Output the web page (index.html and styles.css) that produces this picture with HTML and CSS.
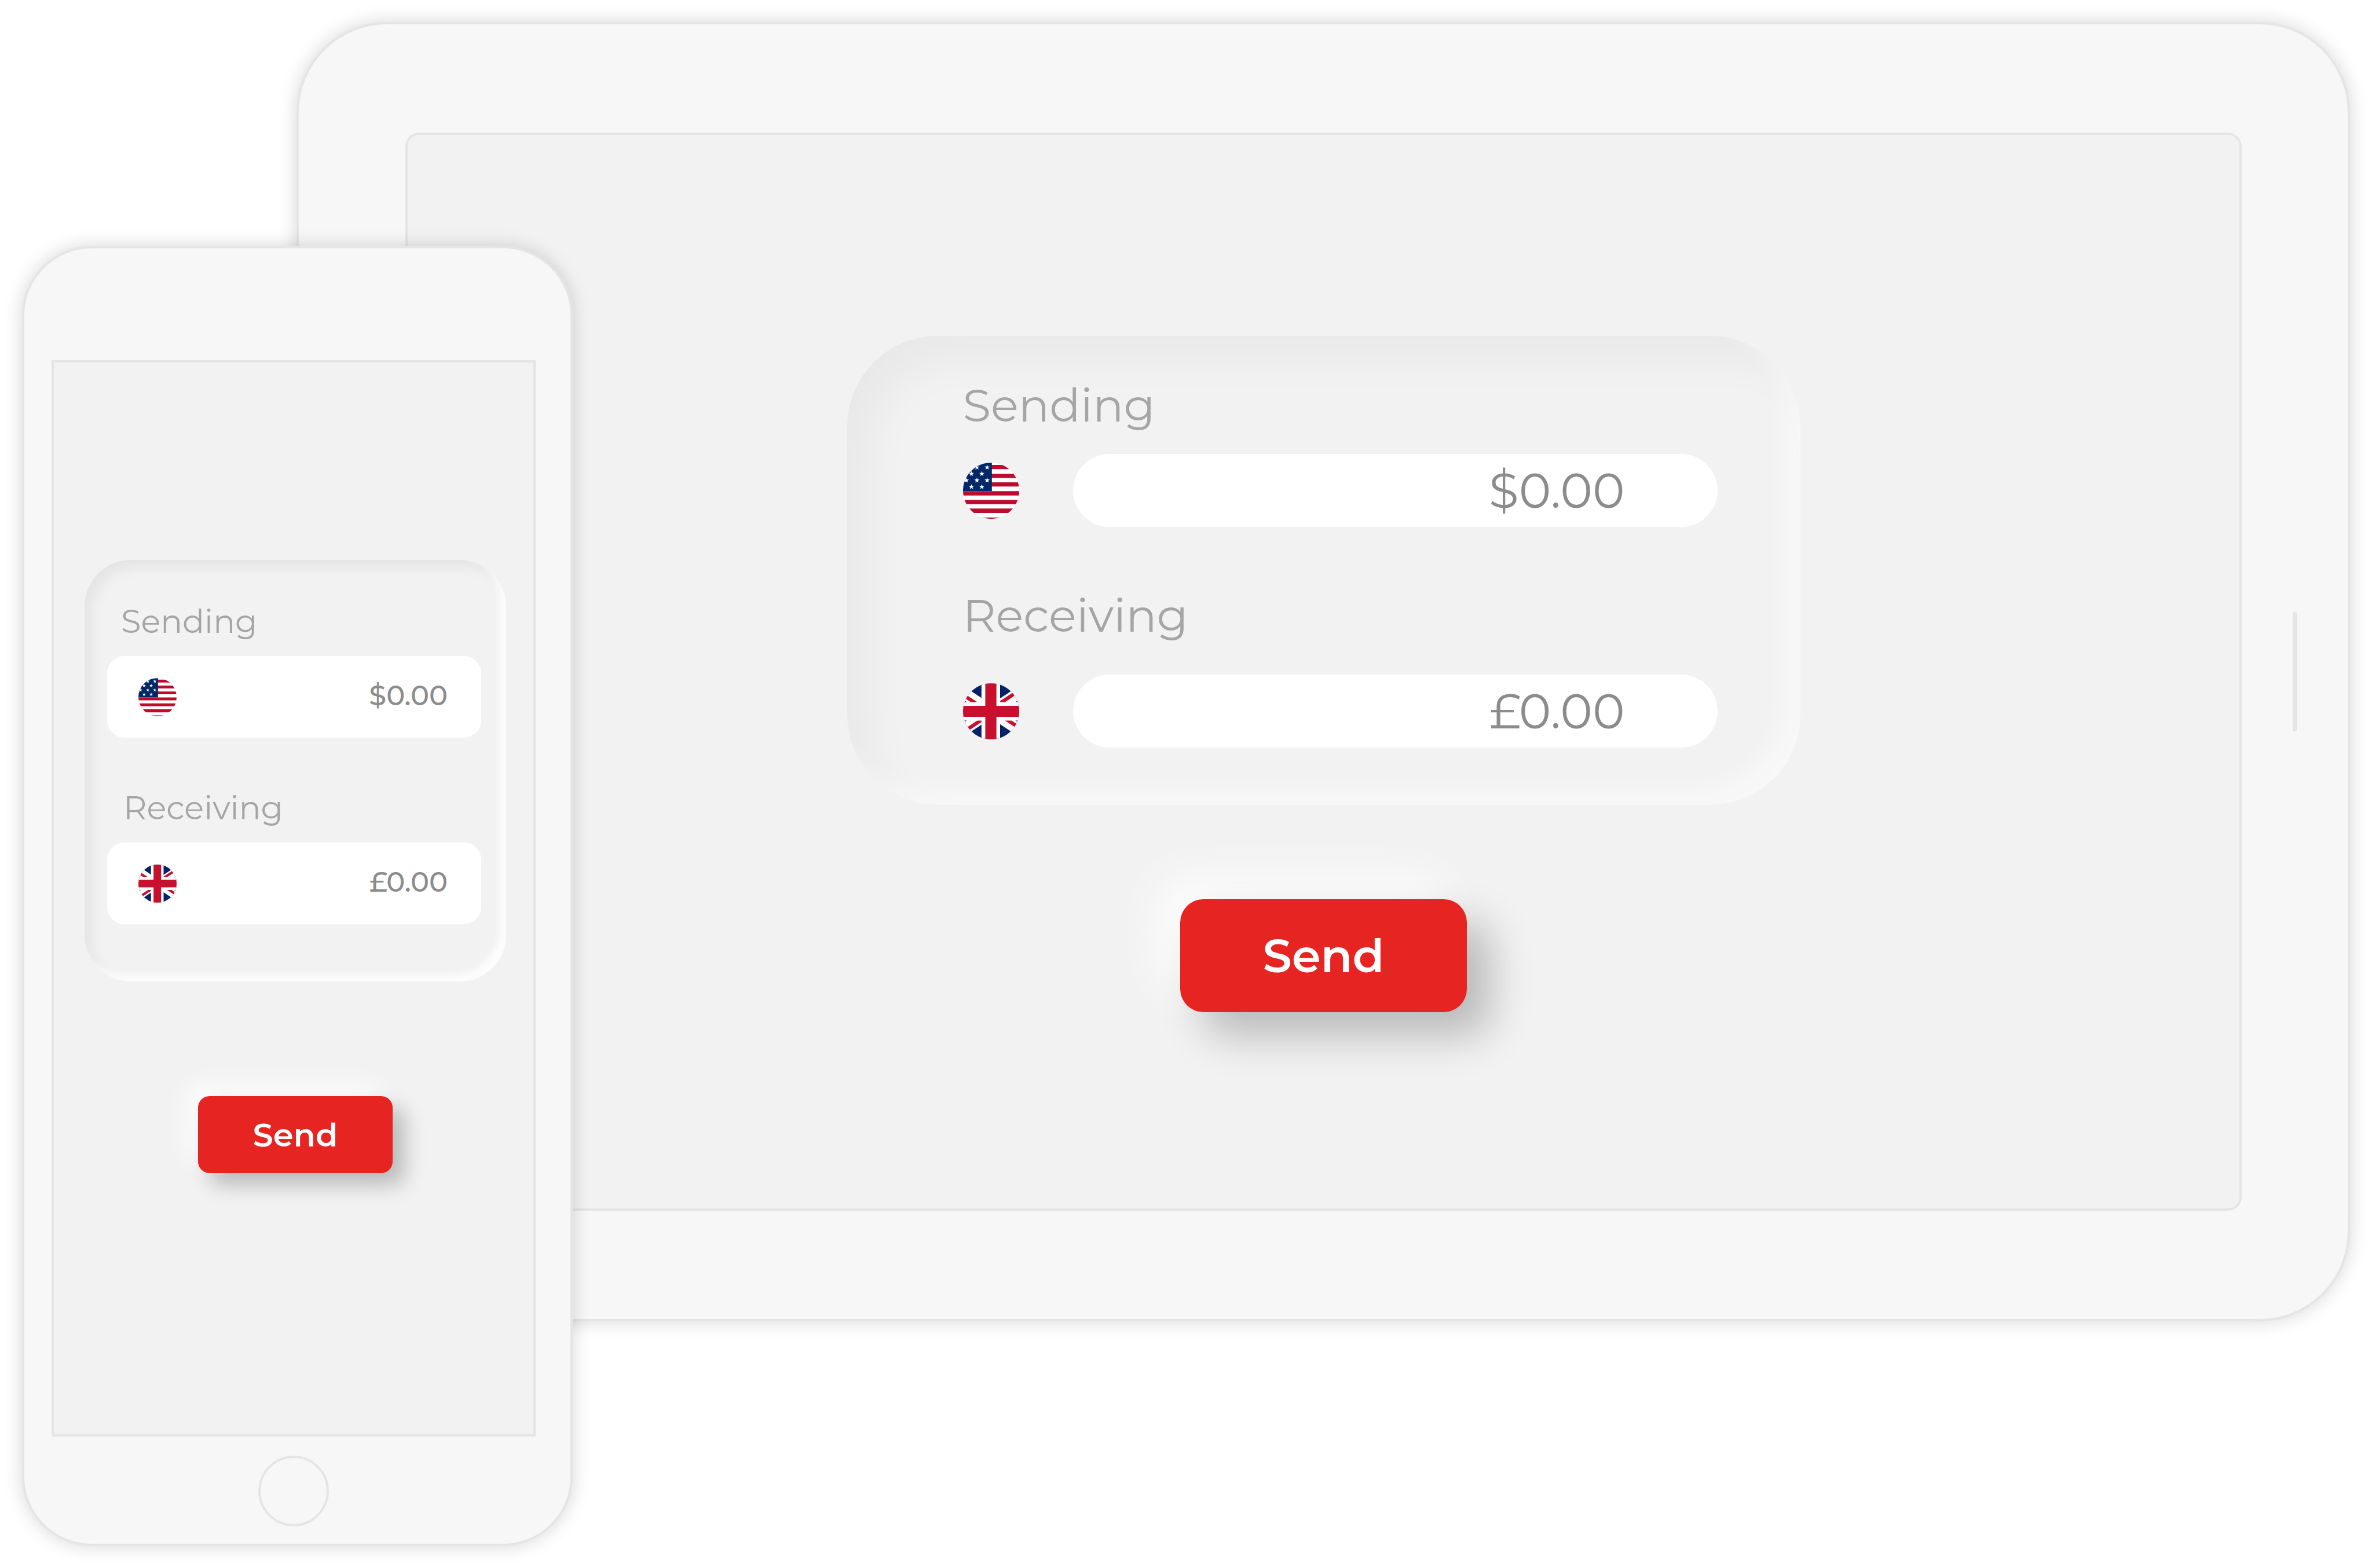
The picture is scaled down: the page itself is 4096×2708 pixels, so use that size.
FILE: index.html
```html
<!DOCTYPE html>
<html lang="en">
<head>
  <meta charset="utf-8">
  <meta name="viewport" content="width=device-width, initial-scale=1">
  <title>Send money</title>
  <link rel="stylesheet" href="styles.css">
</head>
<body>
  <svg class="defs" aria-hidden="true">
    <defs>
      <path id="star" d="M0-15 3.6-4.9 14.3-4.6 5.8 1.9 8.8 12.1 0 6.1-8.8 12.1-5.8 1.9-14.3-4.6-3.6-4.9Z"/>
      <symbol id="flag-us" viewBox="0 0 308 306">
        <rect width="308" height="306" fill="#fff"/>
        <path fill="#bf0a30" d="M0 12h308v23H0zM0 60h308v23H0zM0 107h308v23H0zM0 155h308v24H0zM0 203h308v24H0zM0 251h308v24H0zM0 300h308v24H0z"/>
        <rect width="158" height="155" fill="#002868"/>
        <g fill="#fff">
          <use href="#star" x="76" y="25"/><use href="#star" x="132" y="25"/>
          <use href="#star" x="46" y="60"/><use href="#star" x="103" y="60"/>
          <use href="#star" x="18" y="96"/><use href="#star" x="76" y="96"/><use href="#star" x="132" y="96"/>
          <use href="#star" x="46" y="132"/><use href="#star" x="103" y="132"/>
        </g>
      </symbol>
      <symbol id="flag-uk" viewBox="0 0 308 306">
        <rect width="308" height="306" fill="#012169"/>
        <path fill="#fff" d="M-10 6 318 224V300L-10 82ZM-10 224 318 6V82L-10 300Z"/>
        <path fill="#c8102e" d="M-10 44 154 153V177L-10 68ZM154 153 318 44V20L154 129ZM-10 262 154 153V177L-10 286ZM154 153 318 262V238L154 129Z"/>
        <path fill="#fff" d="M101 0h102v306H101zM0 102h308v102H0z"/>
        <path fill="#c8102e" d="M122 0h61v306h-61zM0 123h308v60H0z"/>
      </symbol>
    </defs>
  </svg>

  <main class="stage">
    <section class="device tablet" aria-label="Tablet">
      <form class="screen">
        <div class="card">
          <div class="field">
            <label class="label" for="tablet-sending">Sending</label>
            <div class="row">
              <svg class="flag" role="img" aria-label="US dollar"><use href="#flag-us"/></svg>
              <input class="amount" id="tablet-sending" type="text" value="$0.00">
            </div>
          </div>
          <div class="field field-receiving">
            <label class="label" for="tablet-receiving">Receiving</label>
            <div class="row">
              <svg class="flag" role="img" aria-label="Pound sterling"><use href="#flag-uk"/></svg>
              <input class="amount" id="tablet-receiving" type="text" value="£0.00">
            </div>
          </div>
        </div>
        <button class="send" type="button">Send</button>
      </form>
      <span class="speaker"></span>
    </section>

    <section class="device phone" aria-label="Phone">
      <form class="screen">
        <div class="card">
          <div class="field">
            <label class="label" for="phone-sending">Sending</label>
            <div class="row">
              <svg class="flag" role="img" aria-label="US dollar"><use href="#flag-us"/></svg>
              <input class="amount" id="phone-sending" type="text" value="$0.00">
            </div>
          </div>
          <div class="field field-receiving">
            <label class="label" for="phone-receiving">Receiving</label>
            <div class="row">
              <svg class="flag" role="img" aria-label="Pound sterling"><use href="#flag-uk"/></svg>
              <input class="amount" id="phone-receiving" type="text" value="£0.00">
            </div>
          </div>
        </div>
        <button class="send" type="button">Send</button>
      </form>
      <span class="home"></span>
    </section>
  </main>
</body>
</html>
```

FILE: styles.css
```css
* {
  box-sizing: border-box;
}

body {
  margin: 0;
  background: #fff;
  font-family: Montserrat, Inter, "Open Sans", sans-serif;
}

.defs {
  display: block;
  width: 0;
  height: 0;
}

.stage {
  display: grid;
  align-items: start;
  padding: 38px;
}

/* Shared parts */
.device {
  grid-area: 1 / 1;
  background: #f7f7f7;
  border: 4px solid #e5e5e5;
  box-shadow: 0 0 32px rgba(0, 0, 0, 0.16);
}

.screen {
  display: flex;
  flex-direction: column;
  align-items: center;
  background: #f2f2f2;
  border: 4px solid #e5e5e5;
}

.card,
.field {
  display: flex;
  flex-direction: column;
}

.label {
  color: #a5a5a5;
  font-weight: 400;
}

.row {
  display: flex;
  align-items: center;
}

.flag {
  flex: none;
  border-radius: 50%;
  overflow: hidden;
}

.amount {
  flex: 1;
  min-width: 0;
  margin: 0;
  border: 0;
  outline: 0;
  font-family: inherit;
  color: #8c8c8c;
  text-align: right;
}

.send {
  border: 0;
  padding: 0;
  background: #e62421;
  color: #fff;
  font-family: inherit;
  font-weight: 600;
}

/* Tablet */
.tablet {
  display: grid;
  grid-template-columns: 1fr 183px;
  align-items: center;
  justify-items: center;
  margin-left: 474px;
  padding: 187px 0 187px 184px;
  border-radius: 156px;
}

.tablet .screen {
  width: 100%;
  gap: 163px;
  padding: 347px 0 339px;
  border-radius: 24px;
}

.tablet .card {
  width: 1646px;
  gap: 105px;
  padding: 72px 143px 99px 200px;
  border-radius: 156px;
  box-shadow:
    inset -28px -28px 36px rgba(255, 255, 255, 0.45),
    inset 40px 40px 72px rgba(0, 0, 0, 0.04);
}

.tablet .field {
  gap: 36px;
}

.tablet .field-receiving {
  gap: 54px;
}

.tablet .label {
  font-size: 79px;
  line-height: 96px;
}

.tablet .row {
  gap: 93px;
}

.tablet .flag {
  width: 97px;
  height: 97px;
}

.tablet .amount {
  height: 126px;
  padding: 0 160px;
  border-radius: 63px;
  background: #fff;
  font-size: 84px;
  font-weight: 400;
}

.tablet .send {
  width: 495px;
  height: 195px;
  border-radius: 40px;
  font-size: 80px;
  box-shadow:
    40px 40px 72px rgba(0, 0, 0, 0.24),
    -40px -40px 80px rgba(255, 255, 255, 0.8);
}

.speaker {
  width: 8px;
  height: 206px;
  border-radius: 4px;
  background: #e5e5e5;
}

/* Phone */
.phone {
  display: flex;
  flex-direction: column;
  width: 951px;
  margin-top: 387px;
  padding: 193px 60px 30px 47px;
  border-radius: 120px;
}

.phone .screen {
  gap: 198px;
  padding: 341px 47px 451px 53px;
}

.phone .card {
  width: 100%;
  gap: 85px;
  padding: 70px 43px 99px 39px;
  border-radius: 80px;
  box-shadow:
    inset -12px -12px 12px rgba(255, 255, 255, 0.8),
    inset 12px 12px 24px rgba(0, 0, 0, 0.06);
}

.phone .field {
  gap: 24px;
}

.phone .label {
  padding-left: 24px;
  font-size: 56px;
  line-height: 72px;
}

.phone .field-receiving .label {
  padding-left: 28px;
}

.phone .row {
  height: 141px;
  padding: 0 58px 0 54px;
  border-radius: 30px;
  background: #fff;
}

.phone .flag {
  width: 66px;
  height: 66px;
}

.phone .amount {
  padding: 0 0 6px;
  background: transparent;
  font-size: 48px;
  font-weight: 500;
}

.phone .send {
  width: 336px;
  height: 133px;
  border-radius: 20px;
  font-size: 56px;
  box-shadow:
    20px 20px 36px rgba(0, 0, 0, 0.24),
    -20px -20px 40px rgba(255, 255, 255, 0.8);
}

.home {
  align-self: center;
  width: 122px;
  height: 122px;
  margin-top: 33px;
  border: 4px solid #e5e5e5;
  border-radius: 50%;
}
```
